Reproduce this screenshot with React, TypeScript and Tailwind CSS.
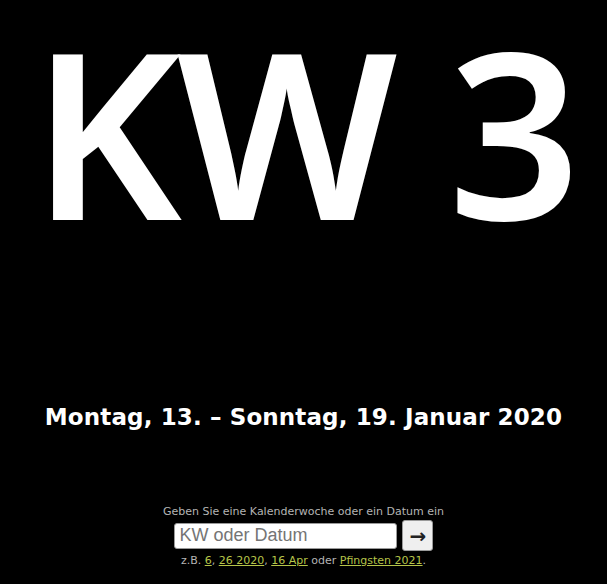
import React from "react";

export default function App() {
  return (
    <div className="min-h-[584px] w-full bg-black flex flex-col items-center text-white">
      <h1
        className="m-0 h-[260px] text-[232px] leading-[260px] font-semibold whitespace-nowrap tracking-[-5px]"
        style={{ fontFamily: "'Noto Sans', 'Open Sans', sans-serif" }}
      >
        KW 3
      </h1>
      <div
        className="mt-[144px] text-[23px] leading-[26px] font-bold whitespace-nowrap tracking-[0.13px]"
        style={{ fontFamily: "'DejaVu Sans', Verdana, sans-serif" }}
      >
        Montag, 13. – Sonntag, 19. Januar 2020
      </div>
      <div
        className="mt-[75px] flex flex-col items-center text-[11px] text-[#b4b4b4]"
        style={{ fontFamily: "'DejaVu Sans', Verdana, sans-serif" }}
      >
        <div className="leading-[14px]">Geben Sie eine Kalenderwoche oder ein Datum ein</div>
        <div className="mt-[1px] flex items-center gap-[5px] pl-[1px]">
          <input
            type="text"
            placeholder="KW oder Datum"
            className="w-[223px] h-[26px] bg-white border border-[#9a9a9a] rounded-[3px] px-[4px] text-[18px] text-black placeholder:text-[#757575] outline-none"
            style={{ fontFamily: "'Liberation Sans', Arial, sans-serif" }}
          />
          <button className="w-[31px] h-[31px] bg-[#efefef] border border-[#9a9a9a] rounded-[3px] text-[20px] font-bold text-[#222] flex items-center justify-center"
            style={{ fontFamily: "'DejaVu Sans', sans-serif" }}>
            →
          </button>
        </div>
        <div className="mt-[3px] leading-[14px]">
          z.B.{" "}
          <a href="#" className="text-[#b6c449] underline">6</a>,{" "}
          <a href="#" className="text-[#b6c449] underline">26 2020</a>,{" "}
          <a href="#" className="text-[#b6c449] underline">16 Apr</a> oder{" "}
          <a href="#" className="text-[#b6c449] underline">Pfingsten 2021</a>.
        </div>
      </div>
    </div>
  );
}
